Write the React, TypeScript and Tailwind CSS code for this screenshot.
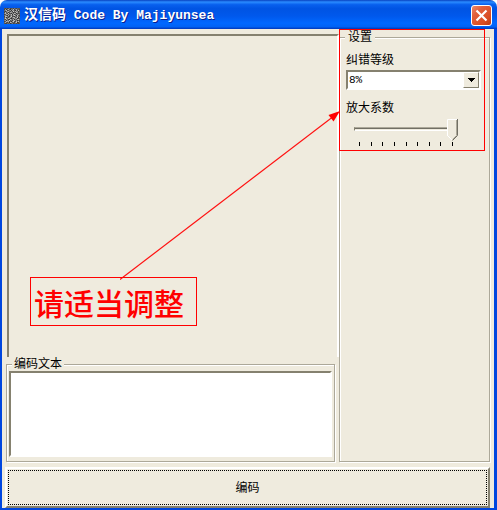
import { useState } from "react";

const LEVELS = ["8%", "15%", "23%", "30%"];
const MAX_SCALE = 9;
const TICKS = Array.from({ length: MAX_SCALE }, (_, i) => i + 1);

// Gray levels of the Han Xin symbol, one hex digit per cell
const ICON_ROWS = [
  "5464574564754655",
  "4937a5386b47a564",
  "68b45793a85394b5",
  "5379b6484c6a7836",
  "4a5836a97354b957",
  "7b64c45386b93645",
  "45a9587b3a4586a6",
  "6853a46959c73b54",
  "4bb7638c45386975",
  "593648a57ba46c38",
  "6c85b9436598a345",
  "54a743b86a3759b6",
  "79386c5749b68354",
  "45b9a4638c54a7b5",
  "6a5473b95648b346",
  "5446563574564545",
];

const LABEL = "font-['Liberation_Sans','Noto_Sans_CJK_SC',sans-serif] text-[12px] leading-[14px] text-black";
const ETCHED = "border border-[#aca899] shadow-[1px_1px_0_#fff,inset_1px_1px_0_#fff]";
const SUNKEN = "border-2 border-t-[#85816f] border-l-[#85816f] border-r-white border-b-white";

export default function App() {
  return (
    <div className={`relative flex min-h-screen w-full flex-col overflow-hidden rounded-t-[7px] bg-[#efebde] ${LABEL}`}>
      <TitleBar />
      <div className="flex flex-1 flex-col border-r-[3px] border-b-2 border-l-2 border-[#0046df] pr-[4px] pl-[3px]">
        <main className="flex flex-1 pt-px pl-px">
          <div className="flex flex-1 flex-col pt-1">
            <div className={`ml-px flex-1 border-b-0 ${SUNKEN}`} />
            <fieldset className={`mr-[4px] flex h-[105px] px-[2px] pb-[4px] ${ETCHED}`}>
              <legend className="ml-[3px] bg-[#efebde] px-[2px]">
                <label htmlFor="source">编码文本</label>
              </legend>
              <textarea id="source" className={`block h-[86px] w-full resize-none bg-white outline-none ${SUNKEN}`} />
            </fieldset>
          </div>
          <Settings />
        </main>
        <button
          type="button"
          className="mt-[5px] h-[41px] border-2 border-t-white border-r-[#85816f] border-b-[#85816f] border-l-white p-px"
        >
          <span className="flex h-full items-center justify-center border border-dotted border-black">编码</span>
        </button>
      </div>
      <Annotation />
    </div>
  );
}

function TitleBar() {
  return (
    <header className="flex h-[29px] items-center bg-[linear-gradient(#0842c0_0,#2a8bff_7%,#0860ee_16%,#0054e3_30%,#0058ec_55%,#0068ff_80%,#0062f5_92%,#0036b8_100%)] pt-[2px] pr-[5px] pl-1">
      <svg className="h-4 w-4" viewBox="0 0 16 16" shapeRendering="crispEdges" aria-hidden="true">
        {ICON_ROWS.map((row, y) =>
          row.split("").map((c, x) => (
            <rect key={`${x}-${y}`} x={x} y={y} width="1" height="1" fill={`#${c}${c}${c}`} />
          ))
        )}
      </svg>
      <h1 className="ml-1 flex-1 font-['Liberation_Mono','Noto_Sans_CJK_SC',monospace] text-[13px] leading-[16px] font-bold whitespace-pre text-white [text-shadow:1px_1px_0_#0a1f8f]">
        <span className="text-[14px]">汉信码</span> Code By Majiyunsea
      </h1>
      <button
        type="button"
        aria-label="关闭"
        className="flex h-[21px] w-[21px] items-center justify-center rounded-[3px] border border-white bg-[linear-gradient(135deg,#ec8a6c_0,#e2603c_30%,#d84c22_75%,#b83a14_100%)]"
      >
        <svg className="h-[13px] w-[13px] shrink-0" viewBox="0 0 13 13" aria-hidden="true">
          <path d="M1.5 1.5 11.5 11.5M11.5 1.5 1.5 11.5" stroke="#fff" strokeWidth="2.2" />
        </svg>
      </button>
    </header>
  );
}

function Settings() {
  return (
    <fieldset className={`w-[151px] shrink-0 pr-[8px] pl-[6px] ${ETCHED}`}>
      <legend className="-ml-px bg-[#efebde] px-[3px]">设置</legend>
      <label htmlFor="level" className="mt-[9px] block">
        纠错等级
      </label>
      <div className="relative mt-[3px]">
        <select
          id="level"
          defaultValue="8%"
          className={`block h-[20px] w-full appearance-none bg-white pl-px font-['Liberation_Mono',monospace] text-[11px] leading-[14px] outline-none ${SUNKEN}`}
        >
          {LEVELS.map((l) => (
            <option key={l}>{l}</option>
          ))}
        </select>
        <span className="pointer-events-none absolute top-[2px] right-[2px] flex h-4 w-4 items-center justify-center border border-t-white border-r-[#85816f] border-b-[#85816f] border-l-white bg-[#efebde]">
          <svg className="h-1 w-[7px]" viewBox="0 0 7 4" shapeRendering="crispEdges" aria-hidden="true">
            <path d="M0 0h7v1H0zM1 1h5v1H1zM2 2h3v1H2zM3 3h1v1H3z" />
          </svg>
        </span>
      </div>
      <label htmlFor="scale" className="mt-[11px] block">
        放大系数
      </label>
      <ScaleSlider />
    </fieldset>
  );
}

function ScaleSlider() {
  const [scale, setScale] = useState(MAX_SCALE);
  const left = ((scale - 1) / (MAX_SCALE - 1)) * 100;

  return (
    <div className="relative mt-[4px] ml-[8px] w-[104px]">
      <div className="flex h-[23px] items-start pt-[8px]">
        <div className="h-[4px] w-full border border-t-[#aca899] border-r-white border-b-white border-l-[#85816f] bg-[linear-gradient(#716f64_50%,#efebde_50%)]" />
      </div>
      <div className="flex justify-between px-[5px]">
        {TICKS.map((t) => (
          <span key={t} className="h-[4px] w-px bg-black" />
        ))}
      </div>
      <div className="absolute top-0 right-[11px] left-0 h-[22px]">
        <svg className="absolute top-0 h-[22px] w-[11px]" style={{ left: `${left}%` }} viewBox="0 0 11 22" aria-hidden="true">
          <path d="M0 0H11V17L5.5 22 0 17Z" fill="#efebde" />
          <path d="M.5 17V.5H10" fill="none" stroke="#fff" />
          <path d="M.5 16.5 5.5 21.5" stroke="#fff" />
          <path d="M10.5 0V16.5L5.5 21.5" fill="none" stroke="#716f64" />
          <path d="M9.5 1V16.5L5.5 20.5" fill="none" stroke="#aca899" />
        </svg>
      </div>
      <input
        id="scale"
        type="range"
        min={1}
        max={MAX_SCALE}
        value={scale}
        onChange={(e) => setScale(Number(e.target.value))}
        className="absolute inset-0 h-[22px] w-full appearance-none opacity-0"
      />
    </div>
  );
}

// Red callout drawn over the window: note, arrow and a frame round the settings
function Annotation() {
  return (
    <div className="pointer-events-none absolute inset-0">
      <div className="absolute top-[29px] right-[12px] h-[122px] w-[146px] border border-[#ff0000]" />
      <svg className="absolute top-[110px] right-[157px] h-[170px] w-[220px]" viewBox="0 0 220 170" aria-hidden="true">
        <path d="M0 169.5 212 7.5" stroke="#ff1010" strokeWidth="1.1" />
        <path d="M220 1 213.5 11.5 208.5 5Z" fill="#ff0000" />
      </svg>
      <p className="absolute top-[277px] left-[30px] h-[49px] w-[167px] border border-[#ff0000] pl-[3px] font-['Noto_Sans_CJK_SC',sans-serif] text-[30px] leading-[48px] font-medium text-[#ff0000]">
        请适当调整
      </p>
    </div>
  );
}
